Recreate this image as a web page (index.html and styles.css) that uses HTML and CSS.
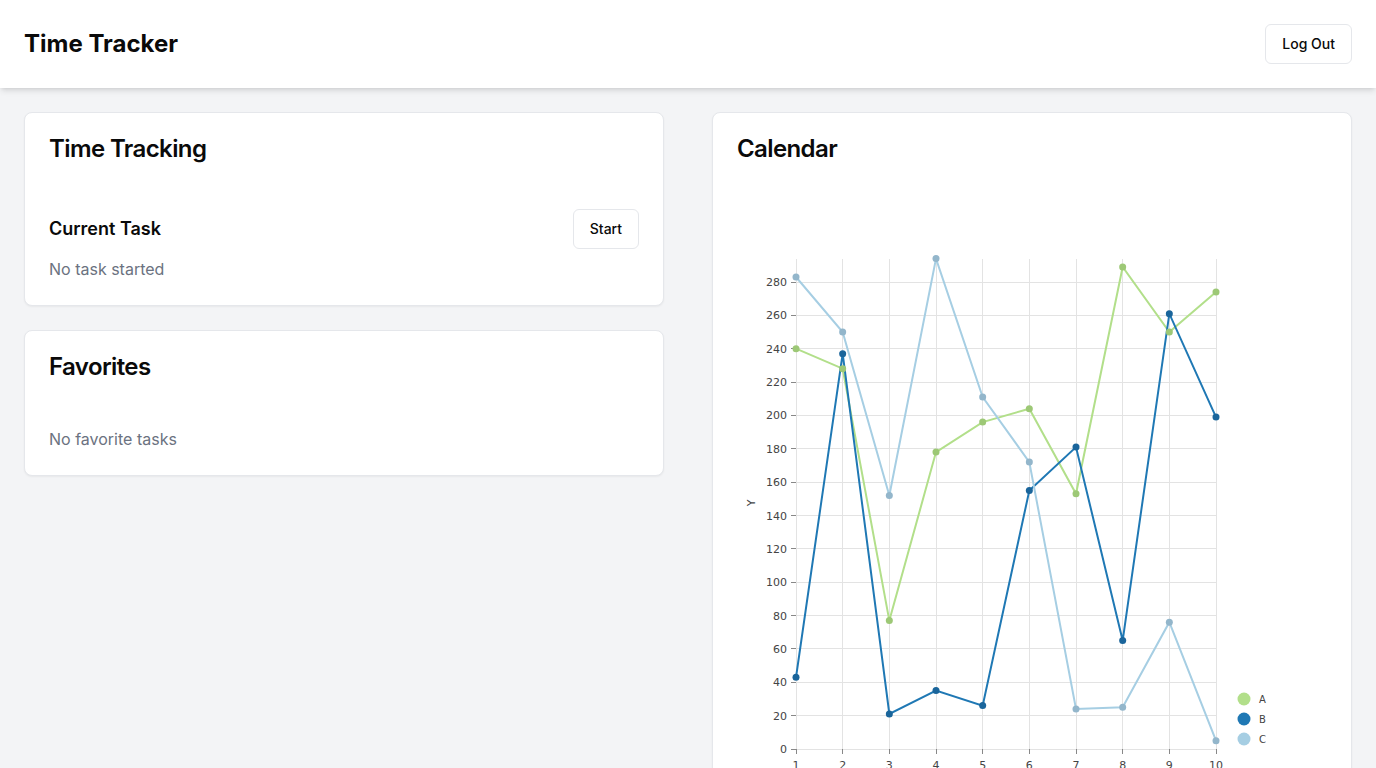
FILE: index.html
```html
<!DOCTYPE html>
<html lang="en">
<head>
<meta charset="utf-8">
<title>Time Tracker</title>
<link rel="stylesheet" href="styles.css">
</head>
<body>
<header class="topbar">
  <h1 class="brand">Time Tracker</h1>
  <button class="btn">Log Out</button>
</header>
<main class="layout">
  <div class="column">
    <section class="card">
      <div class="card-header"><h2 class="card-title">Time Tracking</h2></div>
      <div class="card-content">
        <div class="task-row">
          <h3 class="task-title">Current Task</h3>
          <button class="btn">Start</button>
        </div>
        <p class="muted task-empty">No task started</p>
      </div>
    </section>
    <section class="card">
      <div class="card-header"><h2 class="card-title">Favorites</h2></div>
      <div class="card-content">
        <p class="muted fav-empty">No favorite tasks</p>
      </div>
    </section>
  </div>
  <div class="column">
    <section class="card card-tall">
      <div class="card-header"><h2 class="card-title">Calendar</h2></div>
      <div class="card-content">
        <svg class="chart" width="588" height="600" viewBox="737 185 588 600" xmlns="http://www.w3.org/2000/svg">
          <g class="grid" stroke="#e3e3e3" stroke-width="1" shape-rendering="crispEdges">
            <line x1="796" y1="259" x2="796" y2="749"/>
            <line x1="842.67" y1="259" x2="842.67" y2="749"/>
            <line x1="889.33" y1="259" x2="889.33" y2="749"/>
            <line x1="936" y1="259" x2="936" y2="749"/>
            <line x1="982.67" y1="259" x2="982.67" y2="749"/>
            <line x1="1029.33" y1="259" x2="1029.33" y2="749"/>
            <line x1="1076" y1="259" x2="1076" y2="749"/>
            <line x1="1122.67" y1="259" x2="1122.67" y2="749"/>
            <line x1="1169.33" y1="259" x2="1169.33" y2="749"/>
            <line x1="1216" y1="259" x2="1216" y2="749"/>
            <line x1="796" y1="749" x2="1216" y2="749"/>
            <line x1="796" y1="715.6" x2="1216" y2="715.6"/>
            <line x1="796" y1="682.3" x2="1216" y2="682.3"/>
            <line x1="796" y1="648.9" x2="1216" y2="648.9"/>
            <line x1="796" y1="615.6" x2="1216" y2="615.6"/>
            <line x1="796" y1="582.2" x2="1216" y2="582.2"/>
            <line x1="796" y1="548.9" x2="1216" y2="548.9"/>
            <line x1="796" y1="515.5" x2="1216" y2="515.5"/>
            <line x1="796" y1="482.1" x2="1216" y2="482.1"/>
            <line x1="796" y1="448.8" x2="1216" y2="448.8"/>
            <line x1="796" y1="415.4" x2="1216" y2="415.4"/>
            <line x1="796" y1="382.1" x2="1216" y2="382.1"/>
            <line x1="796" y1="348.7" x2="1216" y2="348.7"/>
            <line x1="796" y1="315.4" x2="1216" y2="315.4"/>
            <line x1="796" y1="282" x2="1216" y2="282"/>
          </g>
          <g class="ticks" stroke="#888" stroke-width="1" shape-rendering="crispEdges">
            <line x1="791" y1="749" x2="796" y2="749"/>
            <line x1="791" y1="715.6" x2="796" y2="715.6"/>
            <line x1="791" y1="682.3" x2="796" y2="682.3"/>
            <line x1="791" y1="648.9" x2="796" y2="648.9"/>
            <line x1="791" y1="615.6" x2="796" y2="615.6"/>
            <line x1="791" y1="582.2" x2="796" y2="582.2"/>
            <line x1="791" y1="548.9" x2="796" y2="548.9"/>
            <line x1="791" y1="515.5" x2="796" y2="515.5"/>
            <line x1="791" y1="482.1" x2="796" y2="482.1"/>
            <line x1="791" y1="448.8" x2="796" y2="448.8"/>
            <line x1="791" y1="415.4" x2="796" y2="415.4"/>
            <line x1="791" y1="382.1" x2="796" y2="382.1"/>
            <line x1="791" y1="348.7" x2="796" y2="348.7"/>
            <line x1="791" y1="315.4" x2="796" y2="315.4"/>
            <line x1="791" y1="282" x2="796" y2="282"/>
            <line x1="796" y1="749" x2="796" y2="754"/>
            <line x1="842.67" y1="749" x2="842.67" y2="754"/>
            <line x1="889.33" y1="749" x2="889.33" y2="754"/>
            <line x1="936" y1="749" x2="936" y2="754"/>
            <line x1="982.67" y1="749" x2="982.67" y2="754"/>
            <line x1="1029.33" y1="749" x2="1029.33" y2="754"/>
            <line x1="1076" y1="749" x2="1076" y2="754"/>
            <line x1="1122.67" y1="749" x2="1122.67" y2="754"/>
            <line x1="1169.33" y1="749" x2="1169.33" y2="754"/>
            <line x1="1216" y1="749" x2="1216" y2="754"/>
          </g>
          <g class="axis-label y-labels">
            <text x="787" y="753">0</text>
            <text x="787" y="719.6">20</text>
            <text x="787" y="686.3">40</text>
            <text x="787" y="652.9">60</text>
            <text x="787" y="619.6">80</text>
            <text x="787" y="586.2">100</text>
            <text x="787" y="552.9">120</text>
            <text x="787" y="519.5">140</text>
            <text x="787" y="486.1">160</text>
            <text x="787" y="452.8">180</text>
            <text x="787" y="419.4">200</text>
            <text x="787" y="386.1">220</text>
            <text x="787" y="352.7">240</text>
            <text x="787" y="319.4">260</text>
            <text x="787" y="286">280</text>
          </g>
          <g class="axis-label x-labels">
            <text x="796" y="769">1</text>
            <text x="842.67" y="769">2</text>
            <text x="889.33" y="769">3</text>
            <text x="936" y="769">4</text>
            <text x="982.67" y="769">5</text>
            <text x="1029.33" y="769">6</text>
            <text x="1076" y="769">7</text>
            <text x="1122.67" y="769">8</text>
            <text x="1169.33" y="769">9</text>
            <text x="1216" y="769">10</text>
          </g>
          <text class="axis-title" transform="translate(755 503) rotate(-90)">Y</text>
          <g fill="none" stroke-width="2" stroke-linejoin="miter">
            <polyline stroke="#b2df8a" points="796,348.7 842.67,368.7 889.33,620.6 936,452.1 982.67,422.1 1029.33,408.7 1076,493.8 1122.67,267 1169.33,332 1216,292"/>
            <polyline stroke="#1f78b4" points="796,677.3 842.67,353.7 889.33,714 936,690.6 982.67,705.6 1029.33,490.5 1076,447.1 1122.67,640.6 1169.33,313.7 1216,417.1"/>
            <polyline stroke="#a6cee3" points="796,277 842.67,332 889.33,495.5 936,258.6 982.67,397.1 1029.33,462.1 1076,709 1122.67,707.3 1169.33,622.2 1216,740.7"/>
          </g>
          <g fill="#9dc876">
            <circle cx="796" cy="348.7" r="3.5"/><circle cx="842.67" cy="368.7" r="3.5"/><circle cx="889.33" cy="620.6" r="3.5"/><circle cx="936" cy="452.1" r="3.5"/><circle cx="982.67" cy="422.1" r="3.5"/><circle cx="1029.33" cy="408.7" r="3.5"/><circle cx="1076" cy="493.8" r="3.5"/><circle cx="1122.67" cy="267" r="3.5"/><circle cx="1169.33" cy="332" r="3.5"/><circle cx="1216" cy="292" r="3.5"/>
          </g>
          <g fill="#1a659b">
            <circle cx="796" cy="677.3" r="3.5"/><circle cx="842.67" cy="353.7" r="3.5"/><circle cx="889.33" cy="714" r="3.5"/><circle cx="936" cy="690.6" r="3.5"/><circle cx="982.67" cy="705.6" r="3.5"/><circle cx="1029.33" cy="490.5" r="3.5"/><circle cx="1076" cy="447.1" r="3.5"/><circle cx="1122.67" cy="640.6" r="3.5"/><circle cx="1169.33" cy="313.7" r="3.5"/><circle cx="1216" cy="417.1" r="3.5"/>
          </g>
          <g fill="#93b6cb">
            <circle cx="796" cy="277" r="3.5"/><circle cx="842.67" cy="332" r="3.5"/><circle cx="889.33" cy="495.5" r="3.5"/><circle cx="936" cy="258.6" r="3.5"/><circle cx="982.67" cy="397.1" r="3.5"/><circle cx="1029.33" cy="462.1" r="3.5"/><circle cx="1076" cy="709" r="3.5"/><circle cx="1122.67" cy="707.3" r="3.5"/><circle cx="1169.33" cy="622.2" r="3.5"/><circle cx="1216" cy="740.7" r="3.5"/>
          </g>
          <g class="legend">
            <circle cx="1244" cy="699" r="6.5" fill="#b2df8a"/>
            <circle cx="1244" cy="719" r="6.5" fill="#1f78b4"/>
            <circle cx="1244" cy="739" r="6.5" fill="#a6cee3"/>
            <text class="legend-label" x="1259" y="703">A</text>
            <text class="legend-label" x="1259" y="723">B</text>
            <text class="legend-label" x="1259" y="743">C</text>
          </g>
        </svg>
      </div>
    </section>
  </div>
</main>
</body>
</html>
```

FILE: styles.css
```css
* {
  box-sizing: border-box;
}

html, body {
  margin: 0;
  padding: 0;
}

body {
  font-family: Inter, "Noto Sans", "Liberation Sans", sans-serif;
  background: #f3f4f6;
  color: #0a0a0a;
  min-height: 100vh;
}

.topbar {
  background: #ffffff;
  display: flex;
  align-items: center;
  justify-content: space-between;
  padding: 24px;
  height: 88px;
  box-shadow: 0 4px 6px -1px rgba(0, 0, 0, 0.1), 0 2px 4px -2px rgba(0, 0, 0, 0.1);
  position: relative;
  z-index: 1;
}

.brand {
  margin: 0;
  font-size: 24px;
  line-height: 32px;
  font-weight: 700;
}

.btn {
  font-family: inherit;
  font-size: 14px;
  font-weight: 500;
  line-height: 20px;
  height: 40px;
  padding: 0 16px;
  color: #0a0a0a;
  background: #ffffff;
  border: 1px solid #e5e7eb;
  border-radius: 6px;
  cursor: pointer;
}

.layout {
  display: grid;
  grid-template-columns: 1fr 1fr;
  gap: 48px;
  padding: 24px;
}

.column {
  display: flex;
  flex-direction: column;
  gap: 24px;
}

.card {
  background: #ffffff;
  border: 1px solid #e5e7eb;
  border-radius: 8px;
  box-shadow: 0 1px 2px 0 rgba(0, 0, 0, 0.05);
}

.card-header {
  padding: 24px;
  display: flex;
  flex-direction: column;
}

.card-title {
  margin: 0;
  font-size: 24px;
  line-height: 24px;
  font-weight: 600;
  letter-spacing: -0.6px;
}

.card-content {
  padding: 0 24px 24px;
}

.task-row {
  margin-top: 24px;
  display: flex;
  align-items: center;
  justify-content: space-between;
}

.task-title {
  margin: 0;
  font-size: 18px;
  line-height: 28px;
  font-weight: 600;
}

.muted {
  margin: 0;
  color: #6b7280;
  font-size: 16px;
  line-height: 24px;
}

.task-empty {
  margin-top: 8px;
}

.fav-empty {
  margin-top: 24px;
}

.card-tall {
  min-height: 700px;
}

.chart {
  display: block;
  overflow: visible;
}

.axis-label {
  font-family: "DejaVu Sans", sans-serif;
  font-size: 11px;
  fill: #444;
}

.y-labels text {
  text-anchor: end;
}

.x-labels text {
  text-anchor: middle;
}

.axis-title {
  font-family: "DejaVu Sans", sans-serif;
  font-size: 11px;
  font-weight: 400;
  fill: #444;
  text-anchor: middle;
}

.legend-label {
  font-family: "DejaVu Sans", sans-serif;
  font-size: 10px;
  fill: #444;
}
```
